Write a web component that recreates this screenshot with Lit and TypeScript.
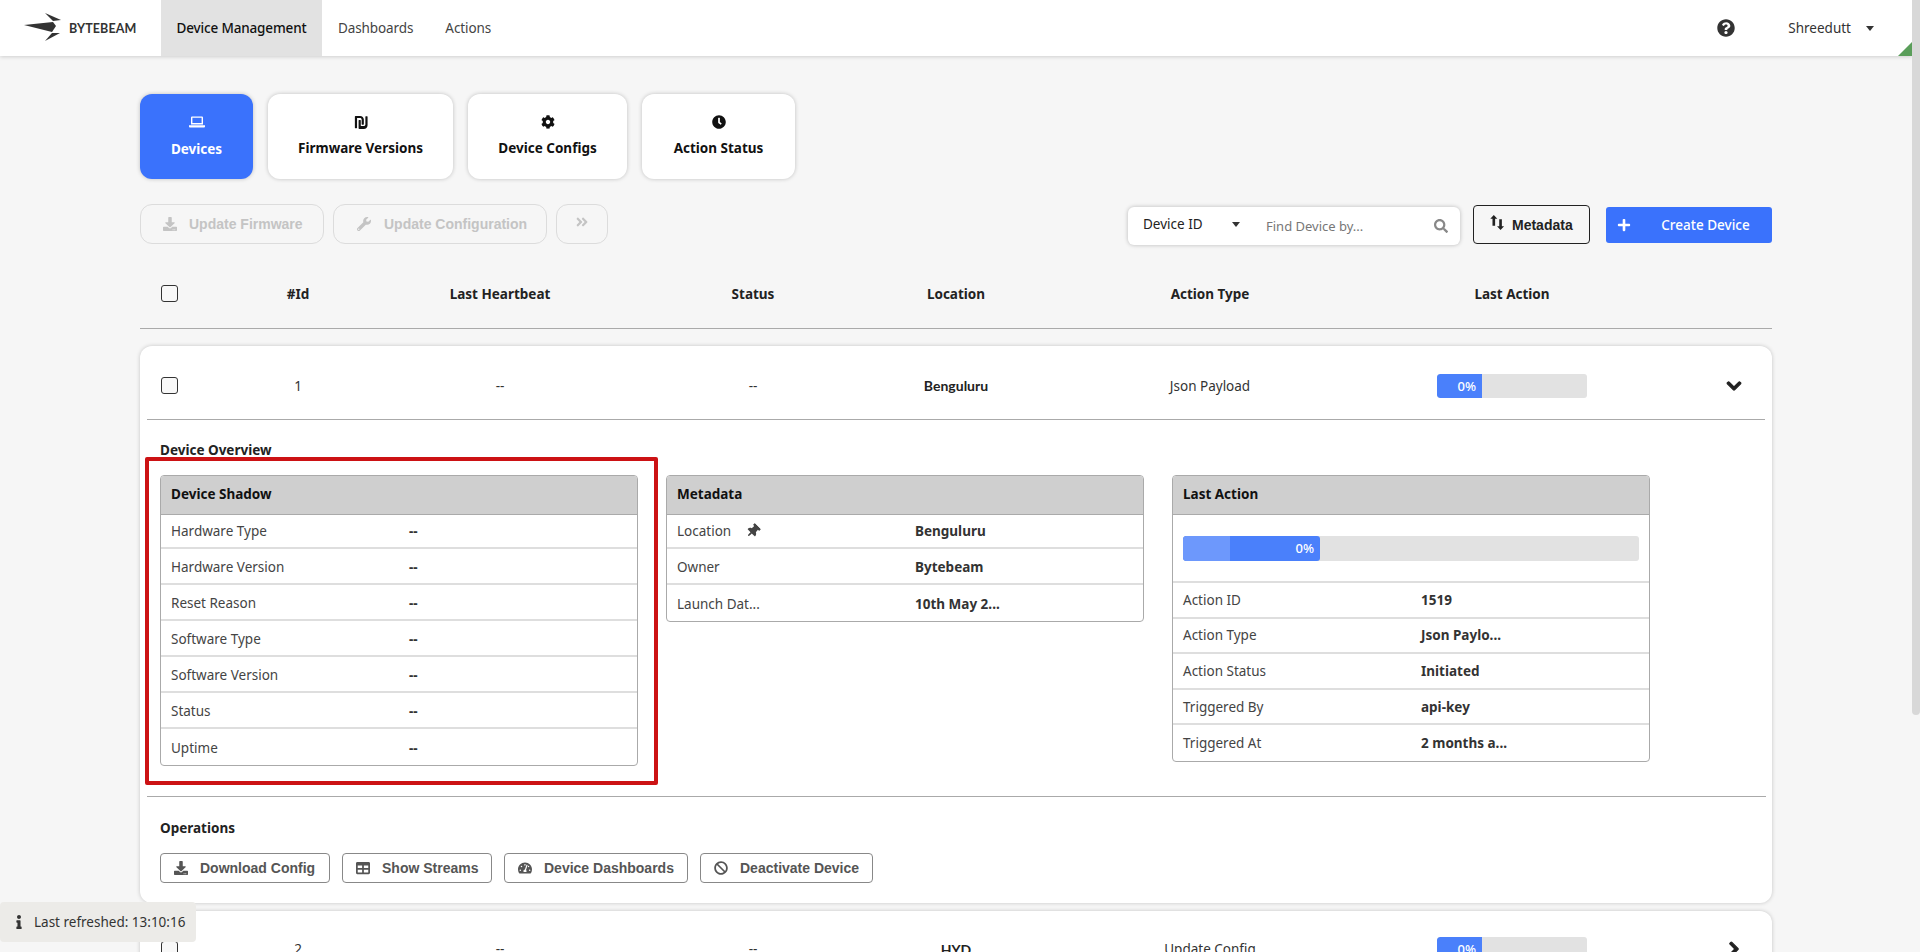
import { LitElement, html, css, svg } from "lit";
import { customElement } from "lit/decorators.js";

type IconDef = [number, string];
const ICONS: Record<string, IconDef> = {
  question: [512, "M504 256c0 136.997-111.043 248-248 248S8 392.997 8 256C8 119.083 119.043 8 256 8s248 111.083 248 248zM262.655 90c-54.497 0-89.255 22.957-116.549 63.758-3.536 5.286-2.353 12.415 2.715 16.258l34.699 26.31c5.205 3.947 12.621 3.008 16.665-2.122 17.864-22.658 30.113-35.797 57.303-35.797 20.429 0 45.698 13.148 45.698 32.958 0 14.976-12.363 22.667-32.534 33.976C247.128 238.528 216 254.941 216 296v4c0 6.627 5.373 12 12 12h56c6.627 0 12-5.373 12-12v-1.333c0-28.462 83.186-29.647 83.186-106.667 0-58.002-60.165-102-116.531-102zM256 338c-25.365 0-46 20.635-46 46 0 25.364 20.635 46 46 46s46-20.636 46-46c0-25.365-20.635-46-46-46z"],
  search: [512, "M505 442.7L405.3 343c-4.5-4.5-10.6-7-17-7H372c27.6-35.3 44-79.7 44-128C416 93.1 322.9 0 208 0S0 93.1 0 208s93.1 208 208 208c48.3 0 92.7-16.4 128-44v16.3c0 6.4 2.5 12.5 7 17l99.7 99.7c9.4 9.4 24.6 9.4 33.9 0l28.3-28.3c9.4-9.4 9.4-24.6.1-34zM208 336c-70.7 0-128-57.2-128-128 0-70.7 57.2-128 128-128 70.7 0 128 57.2 128 128 0 70.7-57.2 128-128 128z"],
  cog: [512, "M487.4 315.7l-42.6-24.6c4.3-23.2 4.3-47 0-70.2l42.6-24.6c4.9-2.8 7.1-8.6 5.5-14-11.1-35.6-30-67.8-54.7-94.6-3.8-4.1-10-5.1-14.8-2.3L380.8 110c-17.9-15.4-38.5-27.3-60.8-35.1V25.8c0-5.6-3.9-10.5-9.4-11.7-36.7-8.2-74.3-7.8-109.2 0-5.5 1.2-9.4 6.1-9.4 11.7V75c-22.2 7.9-42.8 19.8-60.8 35.1L88.7 85.5c-4.9-2.8-11-1.9-14.8 2.3-24.7 26.7-43.6 58.9-54.7 94.6-1.7 5.4.6 11.2 5.5 14L67.3 221c-4.3 23.2-4.3 47 0 70.2l-42.6 24.6c-4.9 2.8-7.1 8.6-5.5 14 11.1 35.6 30 67.8 54.7 94.6 3.8 4.1 10 5.1 14.8 2.3l42.6-24.6c17.9 15.4 38.5 27.3 60.8 35.1v49.2c0 5.6 3.9 10.5 9.4 11.7 36.7 8.2 74.3 7.8 109.2 0 5.5-1.2 9.4-6.1 9.4-11.7v-49.2c22.2-7.9 42.8-19.8 60.8-35.1l42.6 24.6c4.9 2.8 11 1.9 14.8-2.3 24.7-26.7 43.6-58.9 54.7-94.6 1.5-5.5-.7-11.3-5.6-14.1zM256 336c-44.1 0-80-35.9-80-80s35.9-80 80-80 80 35.9 80 80-35.9 80-80 80z"],
  clock: [512, "M256,8C119,8,8,119,8,256S119,504,256,504,504,393,504,256,393,8,256,8Zm92.49,313h0l-20,25a16,16,0,0,1-22.49,2.5h0l-67-49.72a40,40,0,0,1-15-31.23V112a16,16,0,0,1,16-16h32a16,16,0,0,1,16,16V256l58,42.5A16,16,0,0,1,348.49,321Z"],
  download: [512, "M216 0h80c13.3 0 24 10.7 24 24v168h87.7c17.8 0 26.7 21.5 14.1 34.1L269.7 378.3c-7.5 7.5-19.8 7.5-27.3 0L90.1 226.1c-12.6-12.6-3.7-34.1 14.1-34.1H192V24c0-13.3 10.7-24 24-24zm296 376v112c0 13.3-10.7 24-24 24H24c-13.3 0-24-10.7-24-24V376c0-13.3 10.7-24 24-24h146.7l49 49c20.1 20.1 52.5 20.1 72.6 0l49-49H488c13.3 0 24 10.7 24 24zm-124 88c0-11-9-20-20-20s-20 9-20 20 9 20 20 20 20-9 20-20zm64 0c0-11-9-20-20-20s-20 9-20 20 9 20 20 20 20-9 20-20z"],
  wrench: [512, "M507.73 109.1c-2.24-9.03-13.54-12.09-20.12-5.51l-74.36 74.36-67.88-11.31-11.31-67.88 74.36-74.36c6.62-6.62 3.43-17.9-5.66-20.16-47.38-11.74-99.55.91-136.58 37.93-39.64 39.64-50.55 97.1-34.05 147.2L18.74 402.76c-24.99 24.99-24.99 65.51 0 90.5 24.99 24.99 65.51 24.99 90.5 0l213.21-213.21c50.12 16.71 107.47 5.68 147.37-34.22 37.07-37.07 49.7-89.32 37.91-136.73zM64 472c-13.25 0-24-10.75-24-24 0-13.26 10.75-24 24-24s24 10.74 24 24c0 13.25-10.75 24-24 24z"],
  doubleRight: [448, "M224.3 273l-136 136c-9.4 9.4-24.6 9.4-33.9 0l-22.6-22.6c-9.4-9.4-9.4-24.6 0-33.9l96.4-96.4-96.4-96.4c-9.4-9.4-9.4-24.6 0-33.9L54.3 103c9.4-9.4 24.6-9.4 33.9 0l136 136c9.5 9.4 9.5 24.6.1 34zm192-34l-136-136c-9.4-9.4-24.6-9.4-33.9 0l-22.6 22.6c-9.4 9.4-9.4 24.6 0 33.9l96.4 96.4-96.4 96.4c-9.4 9.4-9.4 24.6 0 33.9l22.6 22.6c9.4 9.4 24.6 9.4 33.9 0l136-136c9.4-9.2 9.4-24.4 0-33.8z"],
  plus: [448, "M416 208H272V64c0-17.67-14.33-32-32-32h-32c-17.67 0-32 14.33-32 32v144H32c-17.67 0-32 14.33-32 32v32c0 17.67 14.33 32 32 32h144v144c0 17.67 14.33 32 32 32h32c17.67 0 32-14.33 32-32V304h144c17.67 0 32-14.33 32-32v-32c0-17.67-14.33-32-32-32z"],
  chevDown: [448, "M207.029 381.476L12.686 187.132c-9.373-9.373-9.373-24.569 0-33.941l22.667-22.667c9.357-9.357 24.522-9.375 33.901-.04L224 284.505l154.745-154.021c9.379-9.335 24.544-9.317 33.901.04l22.667 22.667c9.373 9.373 9.373 24.569 0 33.941L240.971 381.476c-9.373 9.372-24.569 9.372-33.942 0z"],
  chevRight: [320, "M285.476 272.971L91.132 467.314c-9.373 9.373-24.569 9.373-33.941 0l-22.667-22.667c-9.357-9.357-9.375-24.522-.04-33.901L188.505 256 34.484 101.255c-9.335-9.379-9.317-24.544.04-33.901l22.667-22.667c9.373-9.373 24.569-9.373 33.941 0L285.475 239.03c9.373 9.372 9.373 24.568.001 33.941z"],
  info: [192, "M20 424.229h20V279.771H20c-11.046 0-20-8.954-20-20V212c0-11.046 8.954-20 20-20h112c11.046 0 20 8.954 20 20v212.229h20c11.046 0 20 8.954 20 20V492c0 11.046-8.954 20-20 20H20c-11.046 0-20-8.954-20-20v-47.771c0-11.046 8.954-20 20-20zM96 0C56.235 0 24 32.235 24 72s32.235 72 72 72 72-32.235 72-72S135.764 0 96 0z"],
  ban: [512, "M256 8C119.034 8 8 119.033 8 256s111.034 248 248 248 248-111.034 248-248S392.967 8 256 8zm130.108 117.892c65.448 65.448 70 165.481 20.677 235.637L150.47 105.216c70.204-49.356 170.226-44.735 235.638 20.676zM125.892 386.108c-65.448-65.448-70-165.481-20.677-235.637L361.53 406.784c-70.203 49.356-170.226 44.736-235.638-20.676z"],
  table: [512, "M464 32H48C21.49 32 0 53.49 0 80v352c0 26.51 21.49 48 48 48h416c26.51 0 48-21.49 48-48V80c0-26.51-21.49-48-48-48zM224 416H64v-96h160v96zm0-160H64v-96h160v96zm224 160H288v-96h160v96zm0-160H288v-96h160v96z"],
  thumbtack: [384, "M298.028 214.267L285.793 96H328c13.255 0 24-10.745 24-24V24c0-13.255-10.745-24-24-24H56C42.745 0 32 10.745 32 24v48c0 13.255 10.745 24 24 24h42.207L85.972 214.267C37.465 236.82 0 277.261 0 328c0 13.255 10.745 24 24 24h136v104.007c0 1.242.289 2.467.845 3.578l24 48c2.941 5.882 11.364 5.893 14.311 0l24-48a8.008 8.008 0 0 0 .845-3.578V352h136c13.255 0 24-10.745 24-24-.001-51.183-37.983-91.42-85.973-113.733z"],
  laptop: [640, "M128 32h384c26.5 0 48 21.5 48 48v272H80V80c0-26.5 21.500-48 48-48zm8 56v208h368V88H136zM0 384h640v48c0 26.500-21.500 48-48 48H48c-26.500 0-48-21.500-48-48v-48z"],
  shekel: [448, "M248 168v168c0 8.84 7.16 16 16 16h48c8.84 0 16-7.16 16-16V168c0-75.11-60.89-136-136-136H24C10.75 32 0 42.74 0 56v408c0 8.84 7.16 16 16 16h48c8.84 0 16-7.16 16-16V112h112c30.93 0 56 25.07 56 56zm200-120h-48c-8.84 0-16 7.16-16 16v280c0 30.93-25.07 56-56 56H216V200c0-8.84-7.16-16-16-16h-48c-8.84 0-16 7.16-16 16v288c0 13.25 10.75 24 24 24h168c75.11 0 136-60.89 136-136V64c0-8.84-7.16-16-16-16z"],
  tachometer: [576, "M288 32C128.94 32 0 160.94 0 320c0 52.8 14.25 102.26 39.06 144.8 5.61 9.62 16.3 15.2 27.44 15.2h443c11.14 0 21.83-5.58 27.44-15.2C561.75 422.26 576 372.8 576 320c0-159.06-128.94-288-288-288zm0 64c14.71 0 26.58 10.13 30.32 23.65-1.11 2.26-2.64 4.23-3.45 6.67l-9.22 27.67c-5.13 3.49-10.97 6.01-17.64 6.01-17.67 0-32-14.33-32-32S270.33 96 288 96zM96 384c-17.67 0-32-14.33-32-32s14.33-32 32-32 32 14.33 32 32-14.33 32-32 32zm48-160c-17.67 0-32-14.33-32-32s14.33-32 32-32 32 14.33 32 32-14.33 32-32 32zm246.77-72.41l-61.33 184C343.13 347.33 352 364.54 352 384c0 11.72-3.38 22.55-8.88 32H232.88c-5.5-9.45-8.88-20.28-8.88-32 0-33.94 26.5-61.43 59.9-63.59l61.34-184.01c4.17-12.56 17.73-19.45 30.36-15.17 12.57 4.19 19.35 17.79 15.17 30.36zm14.66 57.2l15.52-46.55c3.47-1.29 7.13-2.23 11.05-2.23 17.67 0 32 14.33 32 32s-14.33 32-32 32c-11.38-.01-20.89-6.28-26.57-15.22zM480 384c-17.67 0-32-14.33-32-32s14.33-32 32-32 32 14.33 32 32-14.33 32-32 32z"],
  swap: [512, "M130 0l120 130h-75v240h-90V130H10zM315 142h90v240h75L360 512 240 382h75z"],
};

const icon = (name: string, size: number, cls = "") => {
  const [w, d] = ICONS[name];
  return html`<svg class="icon ${cls}" width=${size} height=${size} viewBox="0 0 ${w} 512" fill="currentColor">${svg`<path d=${d}></path>`}</svg>`;
};

const SHADOW = [["Hardware Type", "--"], ["Hardware Version", "--"], ["Reset Reason", "--"], ["Software Type", "--"], ["Software Version", "--"], ["Status", "--"], ["Uptime", "--"]];
const META = [["Location", "Benguluru"], ["Owner", "Bytebeam"], ["Launch Dat...", "10th May 2..."]];
const ACTION = [["Action ID", "1519"], ["Action Type", "Json Paylo..."], ["Action Status", "Initiated"], ["Triggered By", "api-key"], ["Triggered At", "2 months a..."]];

@customElement("app-root")
export class AppRoot extends LitElement {
  static styles = css`
    :host { display: flex; height: 952px; overflow: hidden; font-family: "Noto Sans", "Open Sans", sans-serif; font-size: 14px; color: #333; background: #f6f6f6; }
    * { box-sizing: border-box; }
    .icon { display: block; flex: none; }
    .page { flex: 1; min-width: 0; height: 952px; overflow: hidden; position: relative; }
    .rail { width: 8px; flex: none; background: #f6f6f6; }
    .thumb { height: 715px; background: #d8d8d8; border-radius: 0 0 4px 4px; }

    nav { position: relative; height: 56px; background: #fff; display: flex; align-items: stretch; box-shadow: 0 1px 4px rgba(0,0,0,.16); }
    .logo { width: 161px; display: flex; align-items: center; padding-left: 20px; color: #333; font-size: 12.5px; font-weight: 700; letter-spacing: .1px; font-family: "Lato", sans-serif; }
    .logo svg { flex: none; margin-right: -1px; }
    .nav-item { display: flex; align-items: center; padding: 0 16px; font-size: 13.5px; color: #444; letter-spacing: -.1px; }
    .nav-item.active { width: 161px; justify-content: center; padding: 0; background: #e2e2e2; color: #111; font-weight: 500; letter-spacing: -.15px; }
    .nav-right { margin-left: auto; display: flex; align-items: center; }
    .help { color: #333; margin-right: 53px; }
    .user { display: flex; align-items: center; gap: 15px; font-size: 13.5px; color: #333; margin-right: 38px; }
    .caret { width: 0; height: 0; border-left: 4px solid transparent; border-right: 4px solid transparent; border-top: 5px solid #333; }
    .triangle { position: absolute; right: 0; bottom: 0; width: 14px; height: 14px; background: #5a9e5a; clip-path: polygon(100% 0, 100% 100%, 0 100%); }

    main { padding: 38px 140px 0; }
    .tabs { display: grid; grid-template-columns: 113px 185px 159px 153px; gap: 15px; height: 85px; }
    .tab { background: #fff; border-radius: 12px; box-shadow: 0 0 4px rgba(0,0,0,.22); display: flex; flex-direction: column; align-items: center; justify-content: center; gap: 10px; font-weight: 700; font-size: 13.5px; color: #111; padding-bottom: 1px; }
    .tab.active { background: #3a72fc; color: #fff; }

    .toolbar { display: flex; justify-content: space-between; margin-top: 25px; height: 41px; }
    .tool-left { display: flex; gap: 9px; }
    .ghost { height: 40px; border: 1px solid #dcdcdc; border-radius: 12px; display: flex; align-items: center; font-family: "Liberation Sans", sans-serif; font-weight: 700; font-size: 14px; color: #c4c4c4; }
    .ghost.fw { width: 184px; padding-left: 22px; gap: 12px; }
    .ghost.cfg { width: 214px; padding-left: 23px; gap: 13px; }
    .ghost.more { width: 52px; justify-content: center; padding-bottom: 4px; }
    .tool-right { display: flex; align-items: center; }
    .search { width: 332px; height: 38px; margin-top: 2px; background: #fff; border-radius: 6px; box-shadow: 0 0 4px rgba(0,0,0,.25); display: flex; align-items: center; padding: 0 12px 0 15px; }
    .search-type { width: 97px; display: flex; align-items: center; justify-content: space-between; color: #222; font-size: 13.5px; padding-bottom: 3px; }
    .search-input { margin-left: 26px; flex: 1; color: #777; font-size: 13px; }
    .search svg { color: #888; }
    .meta-btn { width: 117px; height: 39px; margin-left: 13px; border: 1px solid #222; border-radius: 4px; background: #f6f6f6; display: flex; align-items: center; padding-left: 16px; gap: 7px; font-family: "Liberation Sans", sans-serif; font-weight: 700; font-size: 14px; color: #222; }
    .meta-btn svg { margin-top: -4px; }
    .create { width: 166px; height: 36px; margin-left: 16px; background: #3a72fc; border-radius: 3px; color: #fff; display: flex; align-items: center; font-size: 13.5px; font-weight: 500; }
    .create .plus { width: 35px; display: flex; justify-content: center; }
    .create .lbl { flex: 1; text-align: center; padding-right: 2px; }

    .grid { display: grid; grid-template-columns: 57px 160px 244px 262px 144px 364px 45px 150px 1fr; align-items: center; text-align: center; }
    .head { height: 84px; padding: 14px 0 0 21px; border-bottom: 1px solid #aaa; font-weight: 700; font-size: 13.5px; color: #222; }
    .check { width: 17px; height: 17px; border: 1.5px solid #333; border-radius: 3px; background: #f8f8f8; }

    .card { background: #fff; border-radius: 12px; box-shadow: 0 0 4px rgba(0,0,0,.2); }
    .card.first { margin-top: 17px; height: 557px; }
    .card.second { margin-top: 8px; height: 73px; }
    .card.second .row { padding-top: 3px; }
    .row { height: 73px; padding: 6px 0 0 21px; font-size: 13.5px; color: #333; }
    .rule { height: 1px; background: #aaa; margin: 0 7px; }
    .loc { font-family: "Lato", sans-serif; font-weight: 700; font-size: 14px; color: #222; }
    .mini { position: relative; height: 24px; background: #e2e2e2; border-radius: 3px; overflow: hidden; color: #fff; font-weight: 500; font-size: 13px; }
    .mini .fill { width: 45px; height: 24px; background: #4a80fb; border-radius: 3px 0 0 3px; display: flex; align-items: center; justify-content: flex-end; padding-right: 6px; }
    .chev { justify-self: end; margin-right: 30px; color: #222; }
    .chev svg { stroke: currentColor; stroke-width: 40; }

    .body { padding: 0 20px; }
    .sect { margin: 0; padding-top: 20px; line-height: 20px; height: 40px; font-size: 13.5px; font-weight: 700; color: #222; }
    .panels { display: grid; grid-template-columns: 478px 478px 478px; gap: 28px; margin-top: 15px; height: 306px; align-items: start; }
    .panel { position: relative; }
    .box { border: 1px solid #aaa; border-radius: 4px; background: #fff; }
    .panel-h { height: 39px; background: #cfcfcf; border-bottom: 1px solid #aaa; border-radius: 3px 3px 0 0; display: flex; align-items: center; padding-left: 10px; padding-bottom: 2px; font-weight: 700; font-size: 13.5px; color: #111; }
    .kv { display: grid; grid-template-columns: 238px 1fr; height: 36px; align-items: center; padding: 1px 10px 0; border-bottom: 2px solid #dedede; font-size: 13.5px; color: #444; }
    .kv.first { height: 34px; padding-top: 0; }
    .kv.tight { height: 35.6px; padding-top: 0; }
    .kv:last-child { border-bottom: 0; }
    .kv b { font-weight: 700; color: #333; }
    .kv .k { display: flex; align-items: center; gap: 15px; }
    .pin { transform: rotate(45deg); color: #444; }
    .annot { position: absolute; left: -15px; top: -18px; right: -20px; bottom: -19px; border: 4px solid #cc1214; border-radius: 2px; pointer-events: none; }
    .prog-wrap { height: 68px; display: flex; align-items: center; padding: 0 10px; border-bottom: 2px solid #dedede; }
    .prog { flex: 1; height: 25px; background: #e2e2e2; border-radius: 3px; overflow: hidden; }
    .prog .fill { width: 137px; height: 25px; background: #4a80fb; border-radius: 3px; position: relative; color: #fff; font-weight: 500; font-size: 13px; display: flex; align-items: center; justify-content: flex-end; padding-right: 6px; overflow: hidden; }
    .prog .glow { position: absolute; left: 0; top: 0; bottom: 0; width: 47px; background: #6d98fc; }

    .ops-rule { margin: 15px -14px 0 -13px; height: 1px; background: #aaa; }
    .ops-title { margin: 0; padding-top: 21px; line-height: 20px; font-size: 13.5px; font-weight: 700; color: #222; }
    .ops { display: flex; gap: 12px; margin-top: 15px; }
    .op { height: 30px; border: 1px solid #888; border-radius: 4px; background: #fff; display: flex; align-items: center; padding-left: 13px; gap: 12px; font-family: "Liberation Sans", sans-serif; font-weight: 700; font-size: 14px; color: #555; }
    .op.a { width: 170px; } .op.b { width: 150px; } .op.c { width: 184px; } .op.d { width: 173px; }

    .toast { position: absolute; left: 0; top: 902px; width: 196px; height: 40px; background: #ecebe8; border-radius: 4px; display: flex; align-items: center; padding-left: 12px; gap: 8px; font-size: 13.5px; color: #333; }
  `;

  private kv(rows: string[][], opts: { pin?: boolean; tight?: boolean } = {}) {
    return rows.map(([k, v], i) => html`<div class="kv ${opts.tight ? "tight" : i === 0 ? "first" : ""}"><span class="k">${k}${opts.pin && i === 0 ? icon("thumbtack", 14, "pin") : ""}</span><b>${v}</b></div>`);
  }

  private row(id: string, loc: string, act: string, open: boolean) {
    return html`<div class="grid row">
      <div class="check"></div><div>${id}</div><div>--</div><div>--</div><div class="loc">${loc}</div><div>${act}</div><div></div>
      <div class="mini"><div class="fill">0%</div></div>
      <div class="chev">${open ? icon("chevDown", 16) : icon("chevRight", 16)}</div>
    </div>`;
  }

  render() {
    return html`<div class="page">
      <nav>
        <div class="logo">
          <svg width="50" height="40" viewBox="0 0 50 40" fill="#333"><path d="M4 17 L33 14 L36 18 L32 24 Z"></path><path d="M25 5 L41 12 L33 13 Z"></path><path d="M25 33 L40 25 L32 25 Z"></path></svg>
          <span>BYTEBEAM</span>
        </div>
        <div class="nav-item active">Device Management</div>
        <div class="nav-item">Dashboards</div>
        <div class="nav-item">Actions</div>
        <div class="nav-right">
          <div class="help">${icon("question", 18)}</div>
          <div class="user">Shreedutt <span class="caret"></span></div>
        </div>
        <div class="triangle"></div>
      </nav>
      <main>
        <div class="tabs">
          <div class="tab active">${icon("laptop", 16)}Devices</div>
          <div class="tab">${icon("shekel", 14)}Firmware Versions</div>
          <div class="tab">${icon("cog", 14)}Device Configs</div>
          <div class="tab">${icon("clock", 14)}Action Status</div>
        </div>
        <div class="toolbar">
          <div class="tool-left">
            <div class="ghost fw">${icon("download", 14)}Update Firmware</div>
            <div class="ghost cfg">${icon("wrench", 14)}Update Configuration</div>
            <div class="ghost more">${icon("doubleRight", 14)}</div>
          </div>
          <div class="tool-right">
            <div class="search">
              <div class="search-type">Device ID <span class="caret"></span></div>
              <div class="search-input">Find Device by...</div>
              ${icon("search", 14)}
            </div>
            <div class="meta-btn">${icon("swap", 15)}Metadata</div>
            <div class="create"><span class="plus">${icon("plus", 14)}</span><span class="lbl">Create Device</span></div>
          </div>
        </div>
        <div class="grid head">
          <div class="check"></div><div>#Id</div><div>Last Heartbeat</div><div>Status</div><div>Location</div><div>Action Type</div><div></div><div>Last Action</div><div></div>
        </div>
        <div class="card first">
          ${this.row("1", "Benguluru", "Json Payload", true)}
          <div class="rule"></div>
          <div class="body">
            <h4 class="sect">Device Overview</h4>
            <div class="panels">
              <div class="panel">
                <div class="box"><div class="panel-h">Device Shadow</div>${this.kv(SHADOW)}</div>
                <div class="annot"></div>
              </div>
              <div class="panel">
                <div class="box"><div class="panel-h">Metadata</div>${this.kv(META, { pin: true })}</div>
              </div>
              <div class="panel">
                <div class="box"><div class="panel-h">Last Action</div>
                  <div class="prog-wrap"><div class="prog"><div class="fill"><span class="glow"></span>0%</div></div></div>
                  ${this.kv(ACTION, { tight: true })}
                </div>
              </div>
            </div>
            <div class="ops-rule"></div>
            <h4 class="ops-title">Operations</h4>
            <div class="ops">
              <div class="op a">${icon("download", 14)}Download Config</div>
              <div class="op b">${icon("table", 14)}Show Streams</div>
              <div class="op c">${icon("tachometer", 14)}Device Dashboards</div>
              <div class="op d">${icon("ban", 14)}Deactivate Device</div>
            </div>
          </div>
        </div>
        <div class="card second">${this.row("2", "HYD", "Update Config", false)}</div>
      </main>
      <div class="toast">${icon("info", 14)}Last refreshed: 13:10:16</div>
    </div>
    <div class="rail"><div class="thumb"></div></div>`;
  }
}
